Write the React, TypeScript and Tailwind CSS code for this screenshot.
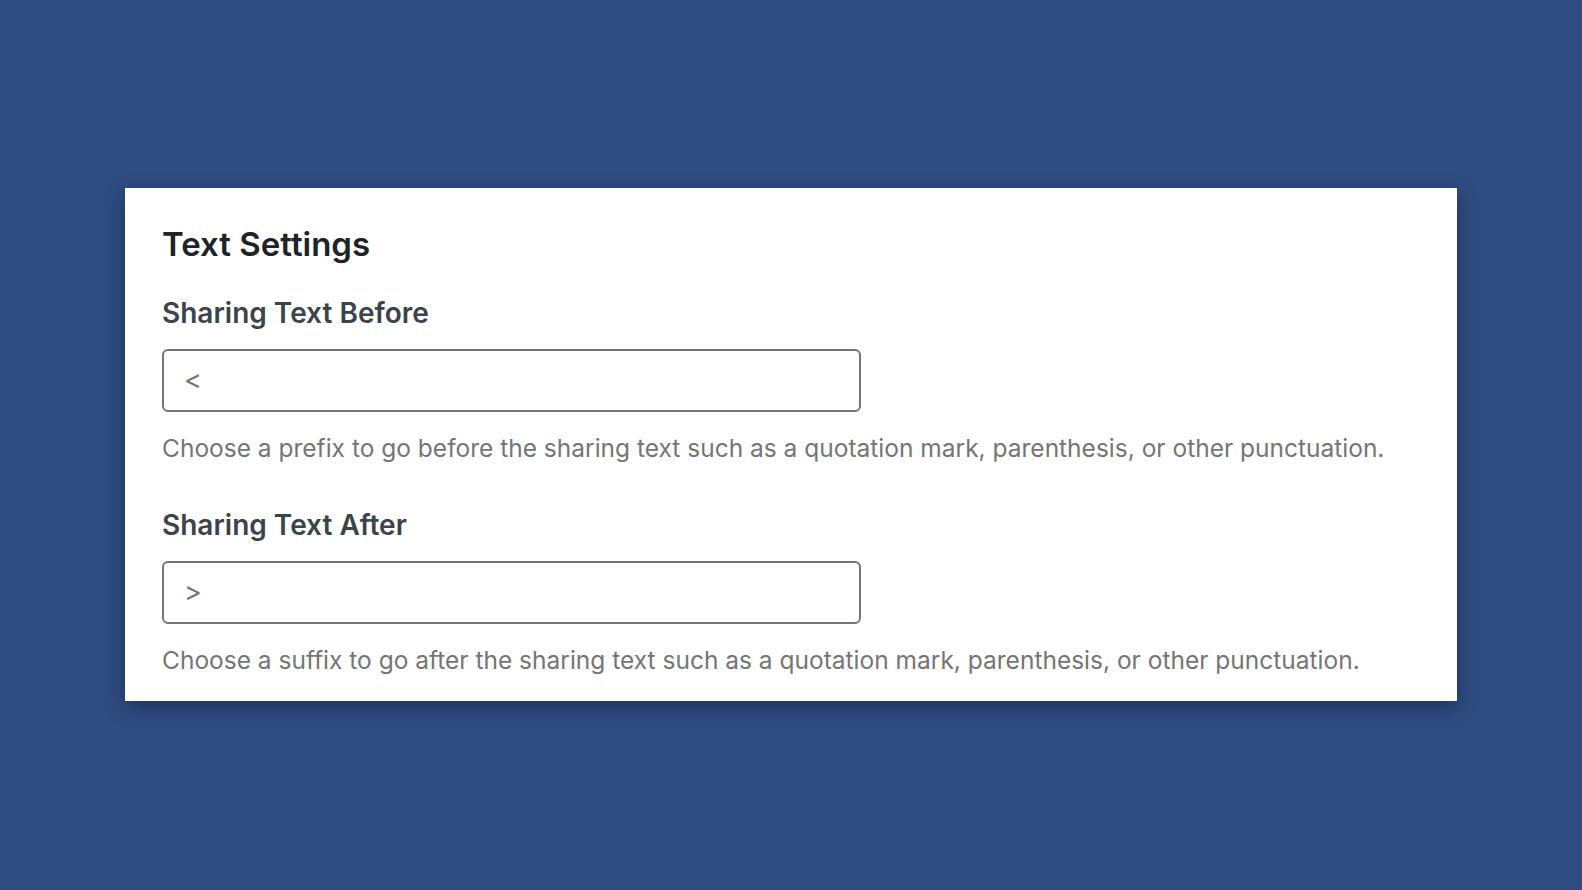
import React from "react";

function Field({ label, value, help }: { label: string; value: string; help: string }) {
  return (
    <div className="flex flex-col">
      <label className="text-[28px] leading-[32px] font-semibold text-[#3c434a]">{label}</label>
      <div className="mt-[20px] w-[699px] h-[63px] border-2 border-[#757575] rounded-[6px] flex items-center px-[20px] text-[27px] text-[#757575]">
        {value}
      </div>
      <p className="mt-[20px] text-[24.5px] leading-[32px] text-[#757575]">{help}</p>
    </div>
  );
}

export default function App() {
  return (
    <div
      className="w-[1582px] h-[890px] bg-[#2f4c81] flex items-start pt-[188px] pl-[125px]"
      style={{ fontFamily: "Inter, 'Noto Sans', sans-serif" }}
    >
      <div className="w-[1332px] h-[513px] bg-white shadow-[0_6px_18px_rgba(10,20,45,0.45)] pt-[36px] px-[37px] flex flex-col">
        <h2 className="text-[33px] leading-[40px] font-semibold text-[#1d2327]">Text Settings</h2>
        <div className="mt-[33px]">
          <Field
            label="Sharing Text Before"
            value="<"
            help="Choose a prefix to go before the sharing text such as a quotation mark, parenthesis, or other punctuation."
          />
        </div>
        <div className="mt-[45px]">
          <Field
            label="Sharing Text After"
            value=">"
            help="Choose a suffix to go after the sharing text such as a quotation mark, parenthesis, or other punctuation."
          />
        </div>
      </div>
    </div>
  );
}
